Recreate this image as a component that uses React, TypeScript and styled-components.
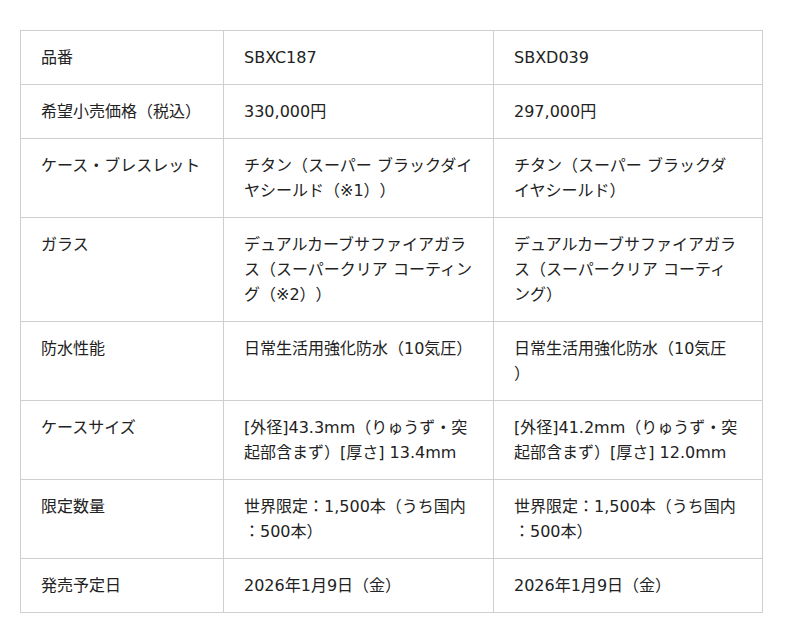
import styled, { createGlobalStyle } from "styled-components";

const GlobalStyle = createGlobalStyle`
  body {
    margin: 0;
    background: #fff;
    font-family: "DejaVu Sans", "Noto Sans CJK JP", sans-serif;
    color: #222;
  }
`;

const Page = styled.div`
  padding: 30px 0 0 20px;
`;

const Table = styled.table`
  width: 742px;
  border-collapse: collapse;
  table-layout: fixed;
`;

const Col = styled.col<{ $w: number }>`
  width: ${(p) => p.$w}px;
`;

const Cell = styled.td`
  border: 1px solid #cfcfcf;
  padding: 14px 19px 14px 20px;
  font-size: 16px;
  line-height: 25px;
  vertical-align: top;
  word-break: break-all;
  line-break: anywhere;
  text-spacing-trim: space-all;

  &:last-child {
    padding-right: 22px;
  }
`;

const rows: [string, string, string][] = [
  ["品番", "SBXC187", "SBXD039"],
  ["希望小売価格（税込）", "330,000円", "297,000円"],
  ["ケース・ブレスレット", "チタン（スーパー ブラックダイヤシールド（※1））", "チタン（スーパー ブラックダイヤシールド）"],
  ["ガラス", "デュアルカーブサファイアガラス（スーパークリア コーティング（※2））", "デュアルカーブサファイアガラス（スーパークリア コーティング）"],
  ["防水性能", "日常生活用強化防水（10気圧）", "日常生活用強化防水（10気圧）"],
  ["ケースサイズ", "[外径]43.3mm（りゅうず・突起部含まず）[厚さ] 13.4mm", "[外径]41.2mm（りゅうず・突起部含まず）[厚さ] 12.0mm"],
  ["限定数量", "世界限定：1,500本（うち国内：500本）", "世界限定：1,500本（うち国内：500本）"],
  ["発売予定日", "2026年1月9日（金）", "2026年1月9日（金）"],
];

export default function App() {
  return (
    <Page>
      <GlobalStyle />
      <Table>
        <colgroup>
          <Col $w={203} />
          <Col $w={270} />
          <Col $w={269} />
        </colgroup>
        <tbody>
          {rows.map((r) => (
            <tr key={r[0]}>
              {r.map((c, i) => (
                <Cell key={i}>{c}</Cell>
              ))}
            </tr>
          ))}
        </tbody>
      </Table>
    </Page>
  );
}
